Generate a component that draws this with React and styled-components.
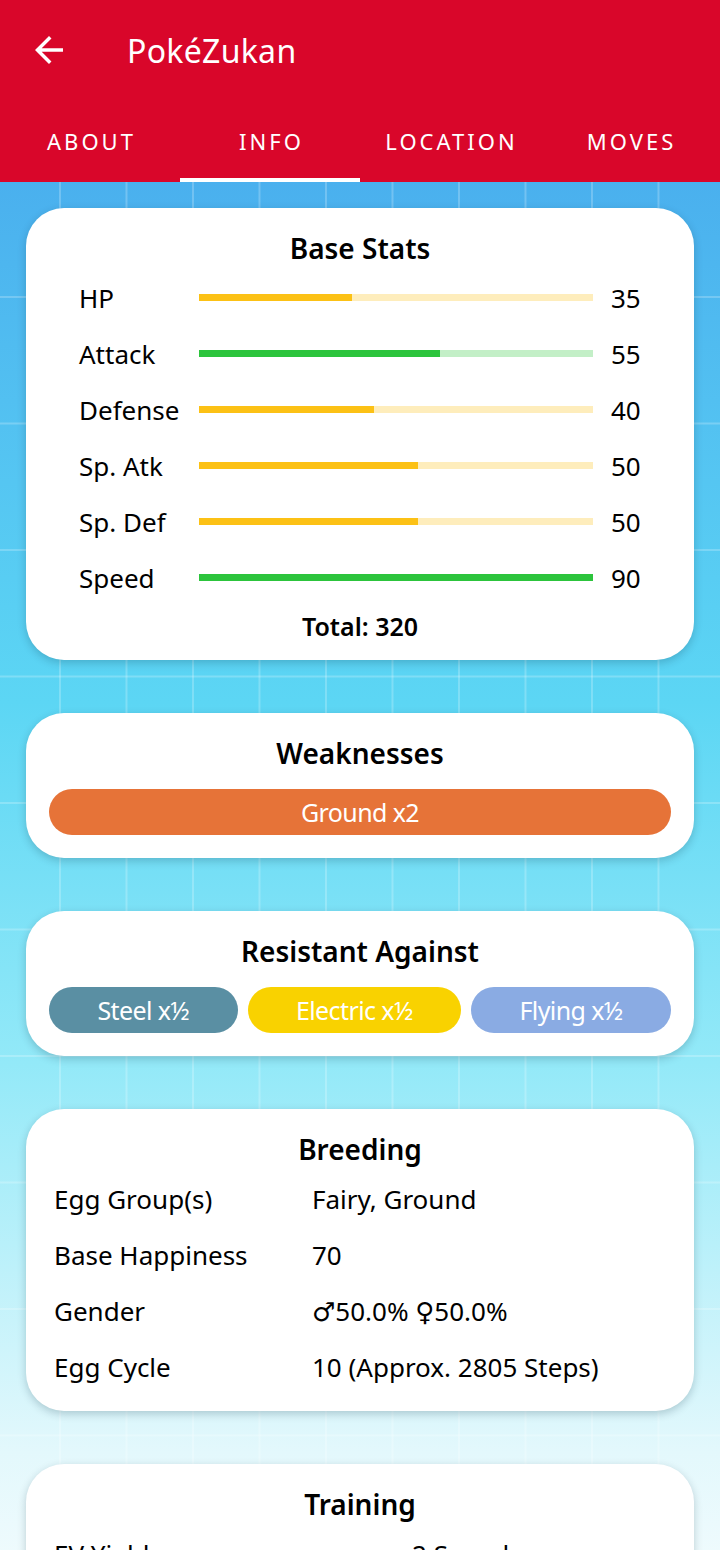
import React from 'react';
import styled, { createGlobalStyle } from 'styled-components';

const GlobalStyle = createGlobalStyle`
    html, body {
        margin: 0;
        padding: 0;
        background: #ffffff;
    }
    body {
        font-family: "Noto Sans", "DejaVu Sans", sans-serif;
        color: #000;
    }
    * {
        box-sizing: border-box;
    }
`;

const Page = styled.div`
    width: 720px;
    min-height: 1550px;
    display: flex;
    flex-direction: column;
`;

const Header = styled.header`
    background: #d9062a;
    color: #fff;
`;

const Toolbar = styled.div`
    height: 100px;
    display: flex;
    align-items: center;
    padding-left: 28px;
`;

const BackButton = styled.button`
    width: 42px;
    height: 42px;
    padding: 0;
    border: 0;
    background: none;
    color: #fff;
    display: flex;
    align-items: center;
    justify-content: center;
    cursor: pointer;
`;

const AppTitle = styled.h1`
    margin: 0 0 0 57px;
    font-size: 32px;
    font-weight: 400;
    letter-spacing: 0.3px;
`;

const Tabs = styled.nav`
    height: 82px;
    display: grid;
    grid-template-columns: repeat(4, 1fr);
`;

const Tab = styled.a`
    position: relative;
    display: flex;
    align-items: center;
    justify-content: center;
    font-size: 22px;
    letter-spacing: 3px;
    text-transform: uppercase;
    color: #fff;
    text-decoration: none;
    padding-left: 3px;

    &::after {
        content: '';
        position: absolute;
        left: 0;
        right: 0;
        bottom: 0;
        height: 4px;
        background: ${props => props.$active ? '#fff' : 'transparent'};
    }
`;

const Main = styled.main`
    flex: 1;
    display: flex;
    flex-direction: column;
    gap: 53px;
    padding: 26px 26px 40px;
    background-color: #ffffff;
    background-image:
        linear-gradient(90deg, rgba(255, 255, 255, 0.22) 2px, transparent 2px),
        linear-gradient(180deg, rgba(255, 255, 255, 0.22) 2px, transparent 2px),
        linear-gradient(180deg, #4ab0ee 0px, #55c6f2 300px, #5cd6f4 520px, #93e9f8 880px, #e3f8fc 1270px, #ffffff 1520px);
    background-size: 66.5px 126.5px, 66.5px 126.5px, 100% 100%;
    background-position: 59px 0, 0 114px, 0 0;
    background-repeat: repeat, repeat, no-repeat;
`;

const Card = styled.section`
    background: #fff;
    border-radius: 38px;
    box-shadow: 0 3px 9px rgba(0, 40, 60, 0.22);
    padding: 22px ${props => props.$side}px ${props => props.$bottom}px;
`;

const CardTitle = styled.h2`
    margin: 0 0 ${props => props.$gap}px;
    font-size: 28px;
    line-height: 36px;
    font-weight: 600;
    text-align: center;
`;

const StatRow = styled.div`
    height: 56px;
    display: grid;
    grid-template-columns: 102px 1fr 30px;
    column-gap: 18px;
    align-items: center;
    padding: 0 27px;
    font-size: 26px;
`;

const Track = styled.div`
    height: 7px;
    background: ${props => props.$light};
    margin-top: -1px;
`;

const Fill = styled.div`
    height: 100%;
    background: ${props => props.$color};
`;

const Total = styled.div`
    font-size: 25px;
    line-height: 36px;
    font-weight: 600;
    text-align: center;
    margin-top: 2px;
`;

const PillRow = styled.div`
    display: flex;
    gap: 10px;
`;

const Pill = styled.span`
    flex: 1 1 auto;
    height: 46px;
    border-radius: 23px;
    background: ${props => props.$color};
    color: #fff;
    font-size: 25px;
    letter-spacing: -0.6px;
    display: flex;
    align-items: center;
    justify-content: center;
    white-space: nowrap;
`;

const InfoRow = styled.div`
    height: 56px;
    display: grid;
    grid-template-columns: ${props => props.$label}px 1fr;
    align-items: center;
    padding-left: 2px;
    font-size: 26px;
`;

const stats = [
    { name: 'HP', value: 35 },
    { name: 'Attack', value: 55 },
    { name: 'Defense', value: 40 },
    { name: 'Sp. Atk', value: 50 },
    { name: 'Sp. Def', value: 50 },
    { name: 'Speed', value: 90 },
];

const breeding = [
    ['Egg Group(s)', 'Fairy, Ground'],
    ['Base Happiness', '70'],
    ['Gender', '♂50.0% ♀50.0%'],
    ['Egg Cycle', '10 (Approx. 2805 Steps)'],
];

const training = [
    ['EV Yield', '2 Speed'],
    ['Catch Rate', '255'],
    ['Base Exp.', '53'],
    ['Growth Rate', 'Medium Fast'],
];

const resist = [
    { label: 'Steel x½', color: '#5a8fa3' },
    { label: 'Electric x½', color: '#f9d200' },
    { label: 'Flying x½', color: '#8aabe3' },
];

const ArrowBack = () => <svg width="42" height="42" viewBox="0 0 24 24" fill="currentColor">
    <path d="M20 11H7.83l5.59-5.59L12 4l-8 8 8 8 1.41-1.41L7.83 13H20v-2z" />
</svg>;

const Stat = ({ stat, max }) => {
    const strong = stat.value >= 55;

    return <StatRow>
        <span>{stat.name}</span>
        <Track $light={strong ? '#c3efc7' : '#feedbc'}>
            <Fill
                $color={strong ? '#2cc43c' : '#fcc115'}
                style={{ width: `${(stat.value / max) * 100}%` }}
            />
        </Track>
        <span>{stat.value}</span>
    </StatRow>;
};

export default function App() {
    const max = Math.max(...stats.map(s => s.value));
    const total = stats.reduce((sum, s) => sum + s.value, 0);

    return <Page>
        <GlobalStyle />
        <Header>
            <Toolbar>
                <BackButton aria-label="Back"><ArrowBack /></BackButton>
                <AppTitle>PokéZukan</AppTitle>
            </Toolbar>
            <Tabs>
                <Tab>About</Tab>
                <Tab $active>Info</Tab>
                <Tab>Location</Tab>
                <Tab>Moves</Tab>
            </Tabs>
        </Header>
        <Main>
            <Card $side={26} $bottom={16}>
                <CardTitle $gap={4}>Base Stats</CardTitle>
                {stats.map(s => <Stat stat={s} max={max} key={s.name} />)}
                <Total>Total: {total}</Total>
            </Card>

            <Card $side={23} $bottom={23}>
                <CardTitle $gap={18}>Weaknesses</CardTitle>
                <PillRow>
                    <Pill $color="#e67338">Ground x2</Pill>
                </PillRow>
            </Card>

            <Card $side={23} $bottom={23}>
                <CardTitle $gap={18}>Resistant Against</CardTitle>
                <PillRow>
                    {resist.map(r => <Pill $color={r.color} key={r.label}>{r.label}</Pill>)}
                </PillRow>
            </Card>

            <Card $side={26} $bottom={16}>
                <CardTitle $gap={4}>Breeding</CardTitle>
                {breeding.map(([label, value]) => <InfoRow $label={258} key={label}>
                    <span>{label}</span>
                    <span>{value}</span>
                </InfoRow>)}
            </Card>

            <Card $side={26} $bottom={16}>
                <CardTitle $gap={4}>Training</CardTitle>
                {training.map(([label, value]) => <InfoRow $label={358} key={label}>
                    <span>{label}</span>
                    <span>{value}</span>
                </InfoRow>)}
            </Card>
        </Main>
    </Page>;
}
